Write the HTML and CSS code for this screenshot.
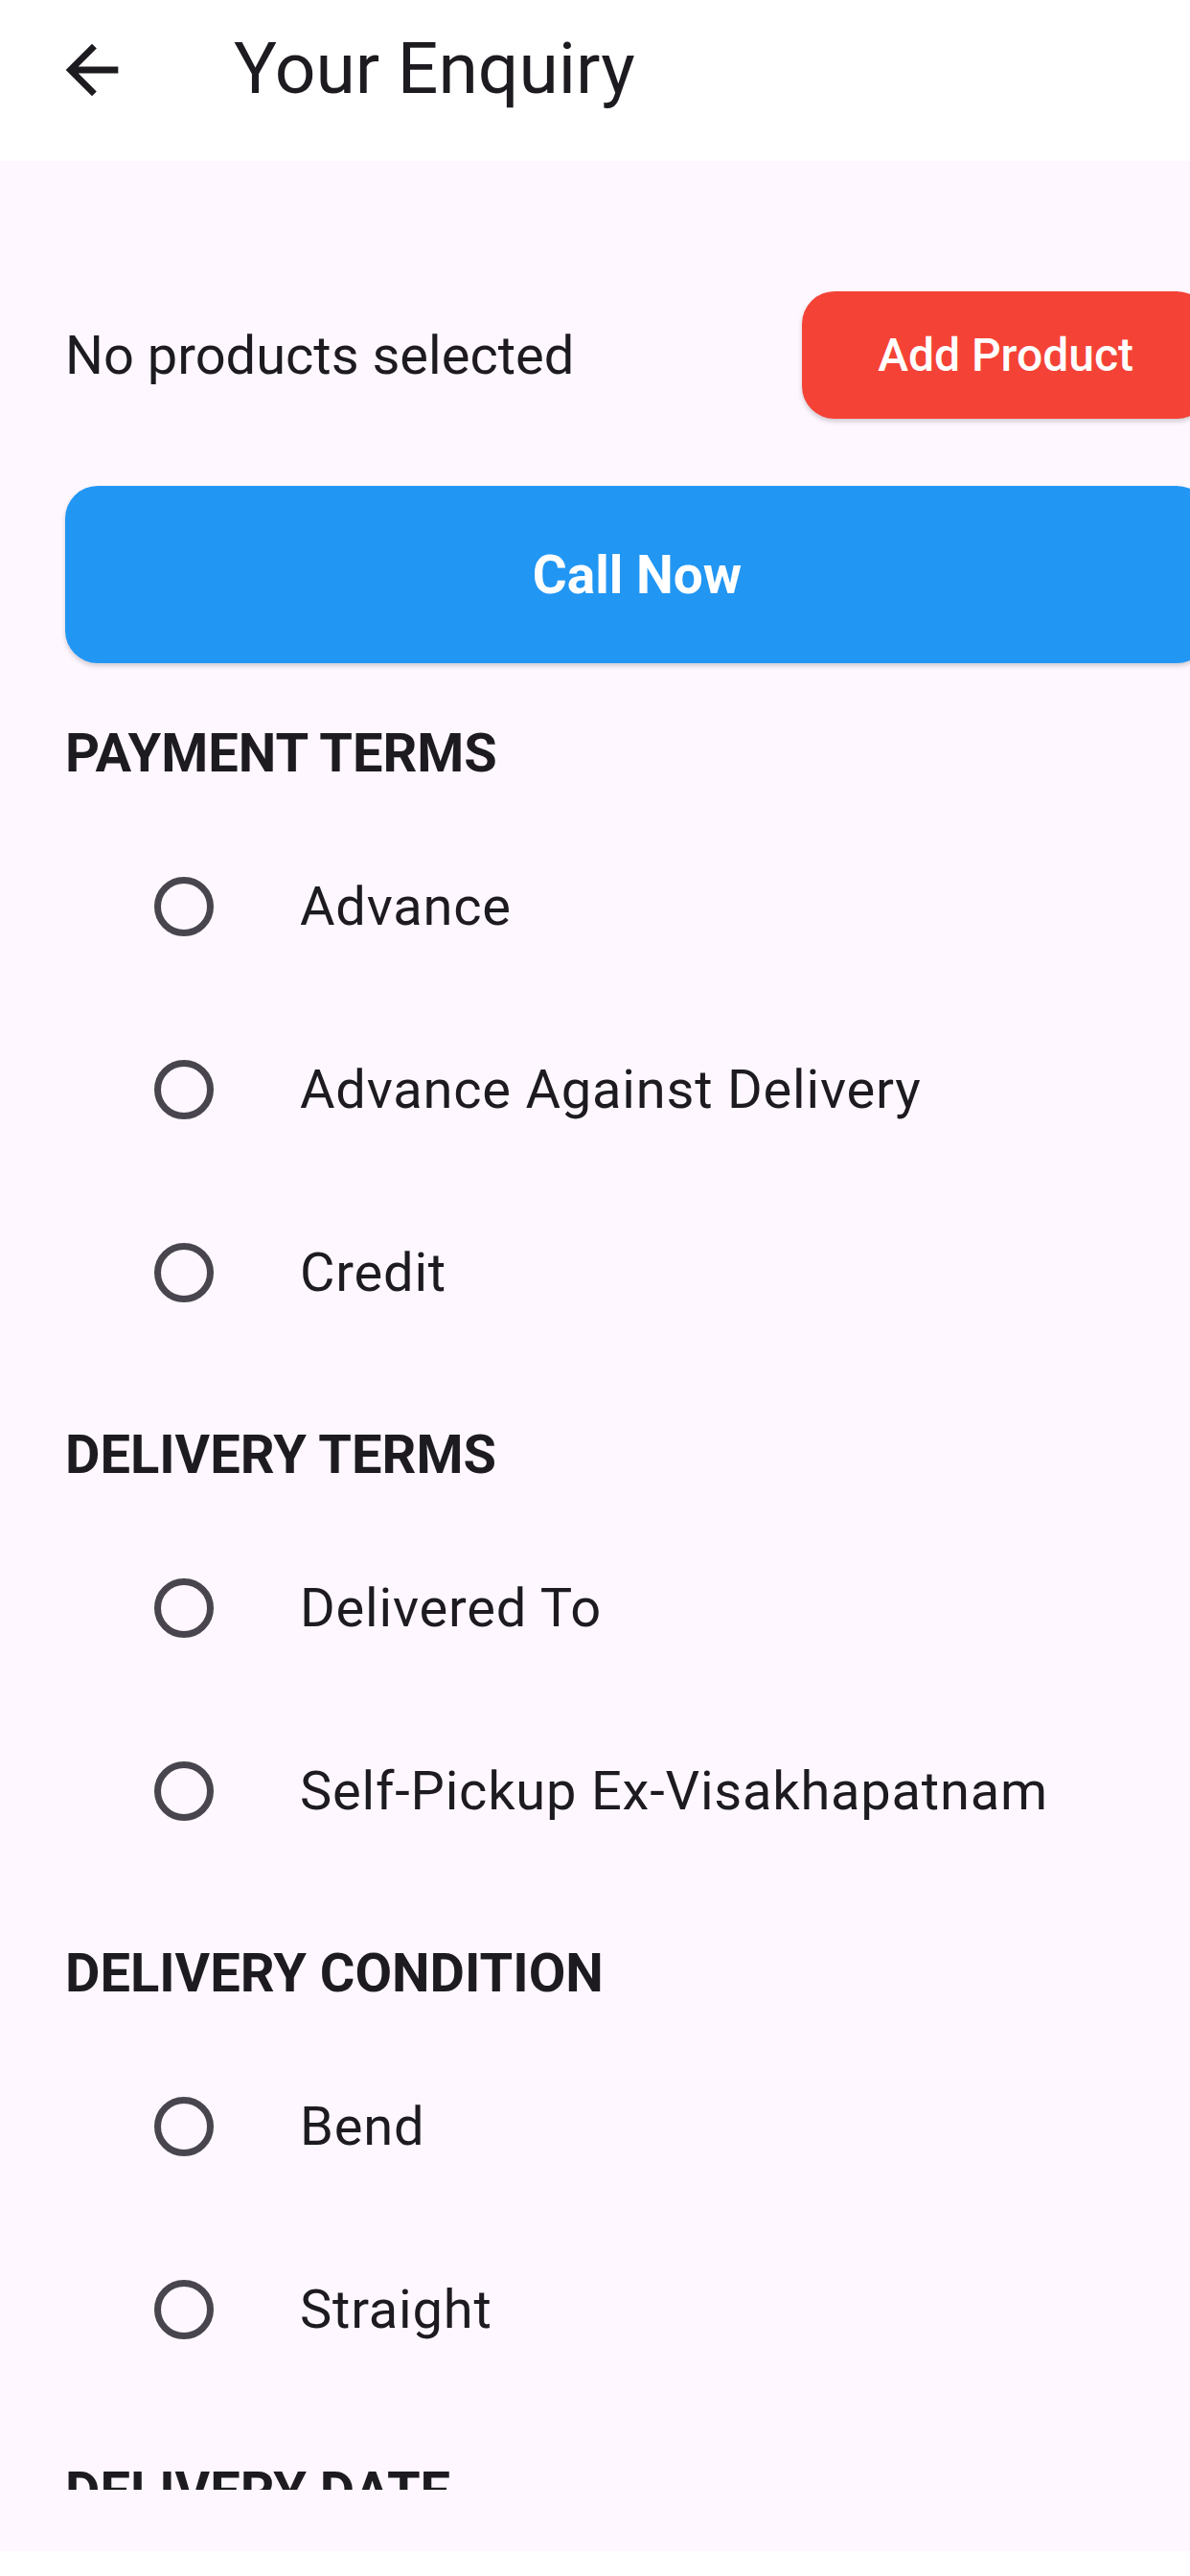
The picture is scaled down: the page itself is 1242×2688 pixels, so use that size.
FILE: index.html
```html
<!DOCTYPE html>
<html lang="en">
<head>
  <meta charset="UTF-8">
  <meta name="viewport" content="width=device-width, initial-scale=1.0">
  <title>Your Enquiry</title>
  <link rel="stylesheet" href="styles.css">
</head>
<body>
<div class="screen">
  <header class="app-bar">
    <div class="toolbar">
      <button class="back-btn" aria-label="Back">
        <svg viewBox="0 0 24 24" width="82" height="82"><path d="M20 11H7.83l5.59-5.59L12 4l-8 8 8 8 1.41-1.41L7.83 13H20v-2z"/></svg>
      </button>
      <h1 class="title">Your Enquiry</h1>
    </div>
  </header>

  <main class="content">
    <div class="inner">
      <div class="products-row">
        <span class="empty-text">No products selected</span>
        <button class="btn btn-add">Add Product</button>
      </div>

      <button class="btn btn-call">Call Now</button>

      <section class="group">
        <h2 class="group-title">PAYMENT TERMS</h2>
        <label class="radio-row"><span class="radio-box"><span class="radio"></span></span><span class="radio-label">Advance</span></label>
        <label class="radio-row"><span class="radio-box"><span class="radio"></span></span><span class="radio-label">Advance Against Delivery</span></label>
        <label class="radio-row"><span class="radio-box"><span class="radio"></span></span><span class="radio-label">Credit</span></label>
      </section>

      <section class="group">
        <h2 class="group-title">DELIVERY TERMS</h2>
        <label class="radio-row"><span class="radio-box"><span class="radio"></span></span><span class="radio-label">Delivered To</span></label>
        <label class="radio-row"><span class="radio-box"><span class="radio"></span></span><span class="radio-label">Self-Pickup Ex-Visakhapatnam</span></label>
      </section>

      <section class="group">
        <h2 class="group-title">DELIVERY CONDITION</h2>
        <label class="radio-row"><span class="radio-box"><span class="radio"></span></span><span class="radio-label">Bend</span></label>
        <label class="radio-row"><span class="radio-box"><span class="radio"></span></span><span class="radio-label">Straight</span></label>
      </section>

      <section class="group">
        <h2 class="group-title">DELIVERY DATE</h2>
      </section>
    </div>
  </main>

  <div class="bottom-space"></div>
  <div class="nav-bar"></div>
</div>
</body>
</html>
```

FILE: styles.css
```css
* { box-sizing: border-box; }
body { margin: 0; font-family: Roboto, "Noto Sans", Arial, sans-serif; color: #1d1b20; background: #fef7ff; overflow: hidden; }
.screen { width: 1242px; height: 2688px; display: flex; flex-direction: column; overflow: hidden; }

.app-bar { height: 168px; flex: none; background: #fff; }
.toolbar { height: 142px; display: flex; align-items: center; }
.back-btn { width: 192px; height: 142px; padding: 0; border: none; background: none; display: flex; align-items: center; justify-content: center; }
.back-btn svg { fill: #1d1b20; margin-top: 4px; }
.title { margin: 0 0 0 52px; font-size: 75px; font-weight: 400; letter-spacing: 0; line-height: 1; }

.content { height: 2430px; flex: none; overflow: hidden; }
.inner { width: 1262px; padding-left: 68px; }

.products-row { display: flex; justify-content: space-between; align-items: center; margin-top: 136px; }
.empty-text { font-size: 56px; letter-spacing: 0; }

.btn { border: none; color: #fff; font-family: Roboto, Arial, sans-serif; border-radius: 34px; box-shadow: 0 3px 5px rgba(0,0,0,0.18); cursor: pointer; }
.btn-add { height: 133px; padding: 0 79px; background: #f44336; font-size: 48px; font-weight: 500; letter-spacing: 0; }
.btn-call { display: block; width: 100%; height: 185px; margin-top: 70px; background: #2196f3; font-size: 55px; font-weight: 700; }

.group { margin-top: 31px; }
.group:first-of-type { margin-top: 30px; }
.group-title { margin: 0; height: 128px; display: flex; align-items: center; font-size: 56px; font-weight: 700; letter-spacing: 0; }

.radio-row { height: 191px; display: flex; align-items: center; padding-left: 55px; }
.radio-box { width: 137px; height: 137px; display: flex; align-items: center; justify-content: center; }
.radio { width: 62px; height: 62px; border: 7px solid #49454f; border-radius: 50%; }
.radio-label { margin-left: 53px; font-size: 56px; letter-spacing: 0.8px; }

.bottom-space { height: 64px; flex: none; background: #fef7ff; }
.nav-bar { flex: 1; background: #fff; }
```
